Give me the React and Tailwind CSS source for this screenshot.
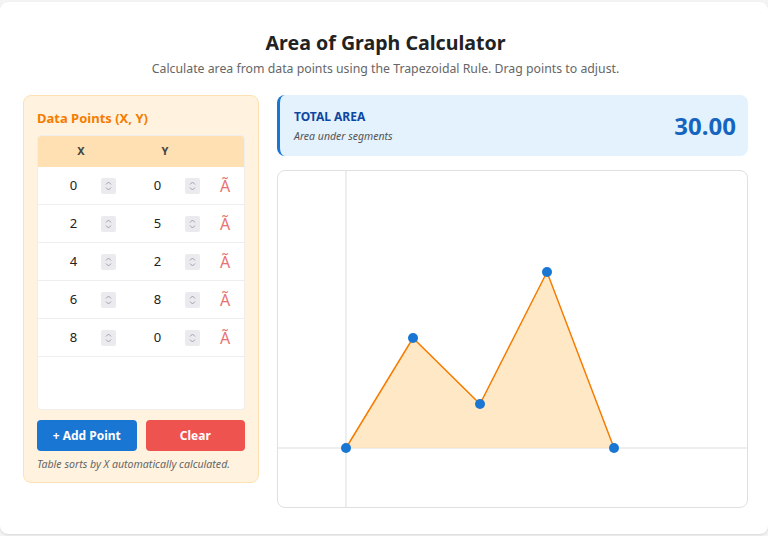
import React, { useState } from "react";

const font = { fontFamily: '"Noto Sans", "Open Sans", sans-serif' };

function Spinner() {
  return (
    <span className="w-[15px] h-[16px] bg-[#ebebef] rounded-[2px] flex items-center justify-center">
      <svg width="9" height="12" viewBox="0 0 9 12" fill="none" stroke="#a0a0a8" strokeWidth="1">
        <path d="M2 4.5 L4.5 2 L7 4.5" />
        <path d="M2 7.5 L4.5 10 L7 7.5" />
      </svg>
    </span>
  );
}

function NumCell({ value, w }) {
  return (
    <div className={`${w} flex justify-center`}>
      <div className="w-[70px] flex items-center">
        <span className="flex-1 text-center">{value}</span>
        <Spinner />
      </div>
    </div>
  );
}

export default function App() {
  const [Points] = useState([
    { x: 0, y: 0 },
    { x: 2, y: 5 },
    { x: 4, y: 2 },
    { x: 6, y: 8 },
    { x: 8, y: 0 },
  ]);

  // chart mapping: origin at (68, 277) inside chart box
  const sx = (v) => 68 + v * 33.5;
  const sy = (v) => 277 - v * 22;
  const line = Points.map((p) => `${sx(p.x)},${sy(p.y)}`).join(" ");
  const area = `${sx(Points[0].x)},${sy(0)} ${line} ${sx(Points[Points.length - 1].x)},${sy(0)}`;

  return (
    <div className="min-h-screen bg-[#f4f4f4] pt-[2px]" style={font}>
      <div className="bg-white rounded-lg shadow-sm h-[532px] pl-[23px] pr-[20px] pt-[28px]">
        <h1 className="text-center text-[19.6px] font-bold text-[#222] leading-[26px]">
          Area of Graph Calculator
        </h1>
        <p className="text-center text-[12.3px] text-[#666] mt-[5px] leading-[16px]">
          Calculate area from data points using the Trapezoidal Rule. Drag points to adjust.
        </p>

        <div className="flex gap-[18px] mt-[18px]">
          <div className="w-[236px] h-[388px] bg-[#fff3e0] border border-[#ffe0b2] rounded-lg px-[13px] pt-[13px] flex flex-col">
            <h2 className="text-[13px] font-bold text-[#f57c00] leading-[18px]">Data Points (X, Y)</h2>
            <div className="mt-[8px] bg-white border border-[#eee] rounded h-[275px] overflow-hidden">
              <div className="flex bg-[#ffe0b2] h-[31px] items-center text-[11px] font-bold text-[#444]">
                <div className="w-[86px] text-center">X</div>
                <div className="w-[82px] text-center">Y</div>
                <div className="flex-1"></div>
              </div>
              {Points.map((p, i) => (
                <div key={i} className="flex h-[38px] items-center border-b border-[#eee] text-[13px] text-[#222]">
                  <NumCell value={p.x} w="w-[86px]" />
                  <NumCell value={p.y} w="w-[82px]" />
                  <div className="flex-1 text-center text-[#e57373] text-[16px] leading-none">Ã</div>
                </div>
              ))}
            </div>
            <div className="flex gap-[9px] mt-[10px]">
              <button className="flex-1 h-[31px] bg-[#1976d2] text-white text-[12px] font-bold rounded">
                + Add Point
              </button>
              <button className="flex-1 h-[31px] bg-[#ef5350] text-white text-[12px] font-bold rounded">
                Clear
              </button>
            </div>
            <p className="mt-[6px] text-[10.6px] italic text-[#666]">Table sorts by X automatically calculated.</p>
          </div>

          <div className="flex-1 flex flex-col gap-[14px]">
            <div className="h-[61px] bg-[#e3f2fd] border-l-[3px] border-[#1976d2] rounded-lg flex items-center justify-between pl-[14px] pr-[12px]">
              <div>
                <div className="text-[12px] font-bold text-[#0d47a1] leading-[16px]">TOTAL AREA</div>
                <div className="text-[10.5px] italic text-[#555] leading-[14px] mt-[4px]">Area under segments</div>
              </div>
              <div className="text-[24px] font-bold text-[#1565c0]">30.00</div>
            </div>
            <div className="h-[338px] border border-[#e0e0e0] rounded-lg overflow-hidden">
              <svg width="100%" height="100%">
                <line x1="68" y1="0" x2="68" y2="338" stroke="#ddd" strokeWidth="1" />
                <line x1="0" y1="277" x2="471" y2="277" stroke="#ddd" strokeWidth="1" />
                <polygon points={area} fill="#ffe0b2" fillOpacity="0.75" />
                <polyline points={line} fill="none" stroke="#f57c00" strokeWidth="1.5" />
                {Points.map((p, i) => (
                  <circle key={i} cx={sx(p.x)} cy={sy(p.y)} r="5" fill="#1976d2" />
                ))}
              </svg>
            </div>
          </div>
        </div>
      </div>
    </div>
  );
}
